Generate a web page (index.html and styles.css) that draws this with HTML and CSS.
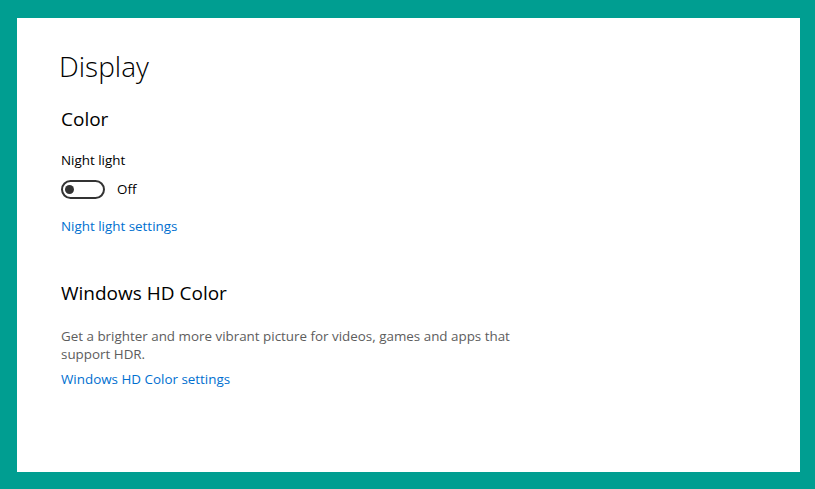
FILE: index.html
```html
<!DOCTYPE html>
<html lang="en">
<head>
    <meta charset="UTF-8">
    <meta name="viewport" content="width=device-width, initial-scale=1.0">
    <title>Display</title>
    <link rel="stylesheet" href="styles.css">
</head>
<body>
    <div class="panel">
        <h1 class="page-title">Display</h1>

        <h2 class="section-title">Color</h2>
        <div class="setting-label">Night light</div>
        <div class="toggle-row">
            <span class="toggle"><span class="knob"></span></span>
            <span class="toggle-state">Off</span>
        </div>
        <a class="link" href="#">Night light settings</a>

        <h2 class="section-title hd">Windows HD Color</h2>
        <p class="desc">Get a brighter and more vibrant picture for videos, games and apps that support HDR.</p>
        <a class="link" href="#">Windows HD Color settings</a>
    </div>
</body>
</html>
```

FILE: styles.css
```css
html, body {
    margin: 0;
    height: 100%;
}
body {
    background-color: #009e91;
    padding: 18px 15px 17px 17px;
    box-sizing: border-box;
    font-family: "Open Sans", "Noto Sans", sans-serif;
    color: #000;
}
.panel {
    background: #fff;
    height: 100%;
    padding: 30px 0 0 44px;
    box-sizing: border-box;
    display: flex;
    flex-direction: column;
    align-items: flex-start;
}
.page-title {
    font-weight: 300;
    font-size: 28px;
    line-height: 36px;
    margin: 0 0 0 -2px;
}
.section-title {
    font-weight: 400;
    font-size: 19px;
    line-height: 26px;
    margin: 22px 0 0 0;
}
.section-title.hd {
    margin-top: 44px;
}
.setting-label {
    font-size: 13.4px;
    line-height: 20px;
    margin-top: 18px;
}
.toggle-row {
    display: flex;
    align-items: center;
    gap: 12px;
    margin-top: 10px;
    font-size: 13.4px;
    line-height: 19px;
}
.toggle {
    width: 44px;
    height: 19px;
    border: 2px solid #333;
    border-radius: 10px;
    display: flex;
    align-items: center;
    padding-left: 2px;
    box-sizing: border-box;
}
.knob {
    width: 9px;
    height: 9px;
    border-radius: 50%;
    background: #333;
}
.link {
    color: #0070d0;
    text-decoration: none;
    font-size: 13.4px;
    line-height: 20px;
    margin-top: 17px;
}
.desc {
    color: #5d5d5d;
    font-size: 13.4px;
    line-height: 18px;
    width: 460px;
    margin: 21px 0 0 0;
}
.desc + .link {
    margin-top: 6px;
}
```
